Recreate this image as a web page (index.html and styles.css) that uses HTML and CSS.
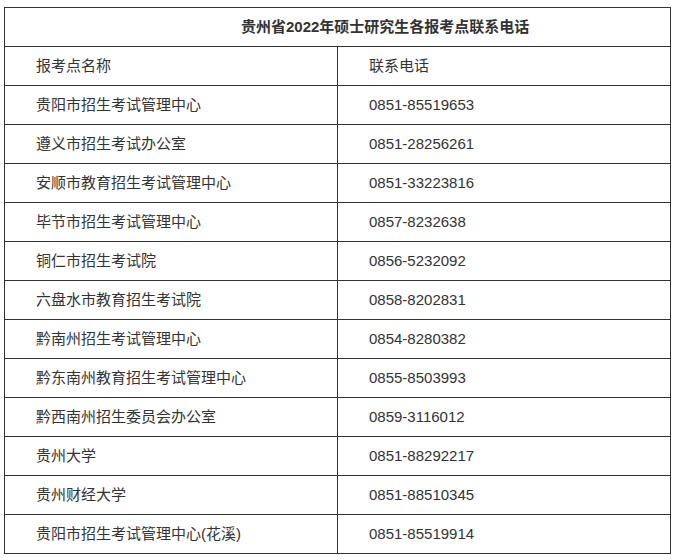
FILE: index.html
```html
<!DOCTYPE html>
<html lang="zh-CN">
<head>
<meta charset="utf-8">
<title>贵州省2022年硕士研究生各报考点联系电话</title>
<link rel="stylesheet" href="styles.css">
</head>
<body>
<table class="contacts">
  <colgroup><col class="c1"><col class="c2"></colgroup>
  <tr><th class="title" colspan="2">贵州省2022年硕士研究生各报考点联系电话</th></tr>
  <tr><td>报考点名称</td><td>联系电话</td></tr>
  <tr><td>贵阳市招生考试管理中心</td><td>0851-85519653</td></tr>
  <tr><td>遵义市招生考试办公室</td><td>0851-28256261</td></tr>
  <tr><td>安顺市教育招生考试管理中心</td><td>0851-33223816</td></tr>
  <tr><td>毕节市招生考试管理中心</td><td>0857-8232638</td></tr>
  <tr><td>铜仁市招生考试院</td><td>0856-5232092</td></tr>
  <tr><td>六盘水市教育招生考试院</td><td>0858-8202831</td></tr>
  <tr><td>黔南州招生考试管理中心</td><td>0854-8280382</td></tr>
  <tr><td>黔东南州教育招生考试管理中心</td><td>0855-8503993</td></tr>
  <tr><td>黔西南州招生委员会办公室</td><td>0859-3116012</td></tr>
  <tr><td>贵州大学</td><td>0851-88292217</td></tr>
  <tr><td>贵州财经大学</td><td>0851-88510345</td></tr>
  <tr><td>贵阳市招生考试管理中心(花溪)</td><td>0851-85519914</td></tr>
</table>
</body>
</html>
```
FILE: styles.css
```css
html, body {
  margin: 0;
  padding: 0;
  background: #fff;
}
body {
  padding: 7px 0 0 4px;
  font-family: "Liberation Sans", "Noto Sans CJK SC", sans-serif;
  color: #333;
}
.contacts {
  border-collapse: collapse;
  width: 666px;
  table-layout: fixed;
  font-size: 15px;
}
.c1 { width: 333px; }
.c2 { width: 333px; }
.contacts td, .contacts th {
  border: 1px solid #333;
  height: 38px;
  padding: 0 0 0 31px;
  box-sizing: border-box;
  text-align: left;
  vertical-align: middle;
  font-weight: normal;
  line-height: 20px;
}
.contacts tr { height: 39px; }
.contacts th.title {
  font-weight: bold;
  font-size: 15px;
  padding-left: 236px;
  color: #333;
}
```
